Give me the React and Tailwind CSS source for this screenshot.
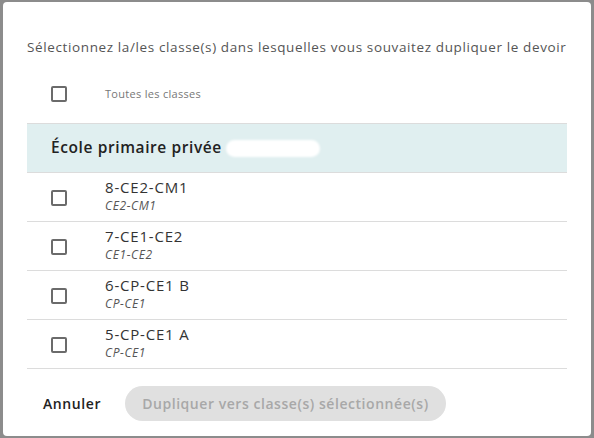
import React from 'react';

const CLASSES = [
    { name: '8-CE2-CM1', level: 'CE2-CM1' },
    { name: '7-CE1-CE2', level: 'CE1-CE2' },
    { name: '6-CP-CE1 B', level: 'CP-CE1' },
    { name: '5-CP-CE1 A', level: 'CP-CE1' },
];

const Checkbox = () => (
    <span className="block w-4 h-4 border-2 border-[#6b6b6b] rounded-[2px] bg-white" />
);

const App = () => {
    return (
        <div
            className="h-[438px] w-[594px] bg-[#8c8c8c] pt-[2px] pl-[3px] overflow-hidden"
            style={{ fontFamily: '"Open Sans", "Liberation Sans", sans-serif' }}
        >
            <div className="w-[588px] h-[434px] bg-white rounded-[4px] px-6 pt-[35px] flex flex-col">
                <p className="text-[13.5px] text-[#555] leading-5 tracking-[0.62px] whitespace-nowrap">
                    Sélectionnez la/les classe(s) dans lesquelles vous souvaitez dupliquer le devoir
                </p>

                {/* Select all */}
                <div className="flex items-center h-[53px] mt-[13px] pb-[5px]">
                    <div className="w-[78px] pl-6">
                        <Checkbox />
                    </div>
                    <span className="text-[11px] text-[#777] tracking-[0.3px]">Toutes les classes</span>
                </div>

                {/* School header */}
                <div className="h-[50px] bg-[#e0eff0] border-t border-b border-[#dcdcdc] flex items-center pl-6">
                    <span className="text-[15.5px] font-semibold text-[#222] tracking-[0.6px]">École primaire privée</span>
                    <span className="ml-[4px] w-[94px] h-[17px] bg-white rounded-full blur-[1px]" />
                </div>

                {/* Class list */}
                <div>
                    {CLASSES.map((c) => (
                        <div key={c.name} className="h-[49px] flex items-center border-b border-[#dcdcdc] pb-[4px]">
                            <div className="w-[78px] pl-6 pt-[6px]">
                                <Checkbox />
                            </div>
                            <div className="flex flex-col gap-[3px]">
                                <span className="text-[15px] leading-[18px] text-[#333] tracking-[0.8px]">{c.name}</span>
                                <span className="text-[12px] leading-[14px] italic text-[#555] tracking-[0.6px]">{c.level}</span>
                            </div>
                        </div>
                    ))}
                </div>

                {/* Footer */}
                <div className="flex items-center mt-[17px] pl-4 gap-6">
                    <button className="text-[14px] font-semibold text-[#222] tracking-[0.6px]">Annuler</button>
                    <button className="h-[35px] px-[17px] rounded-full bg-[#e0e0e0] text-[14px] font-semibold text-[#a8a8a8] tracking-[0.55px]">
                        Dupliquer vers classe(s) sélectionnée(s)
                    </button>
                </div>
            </div>
        </div>
    );
};

export default App;
